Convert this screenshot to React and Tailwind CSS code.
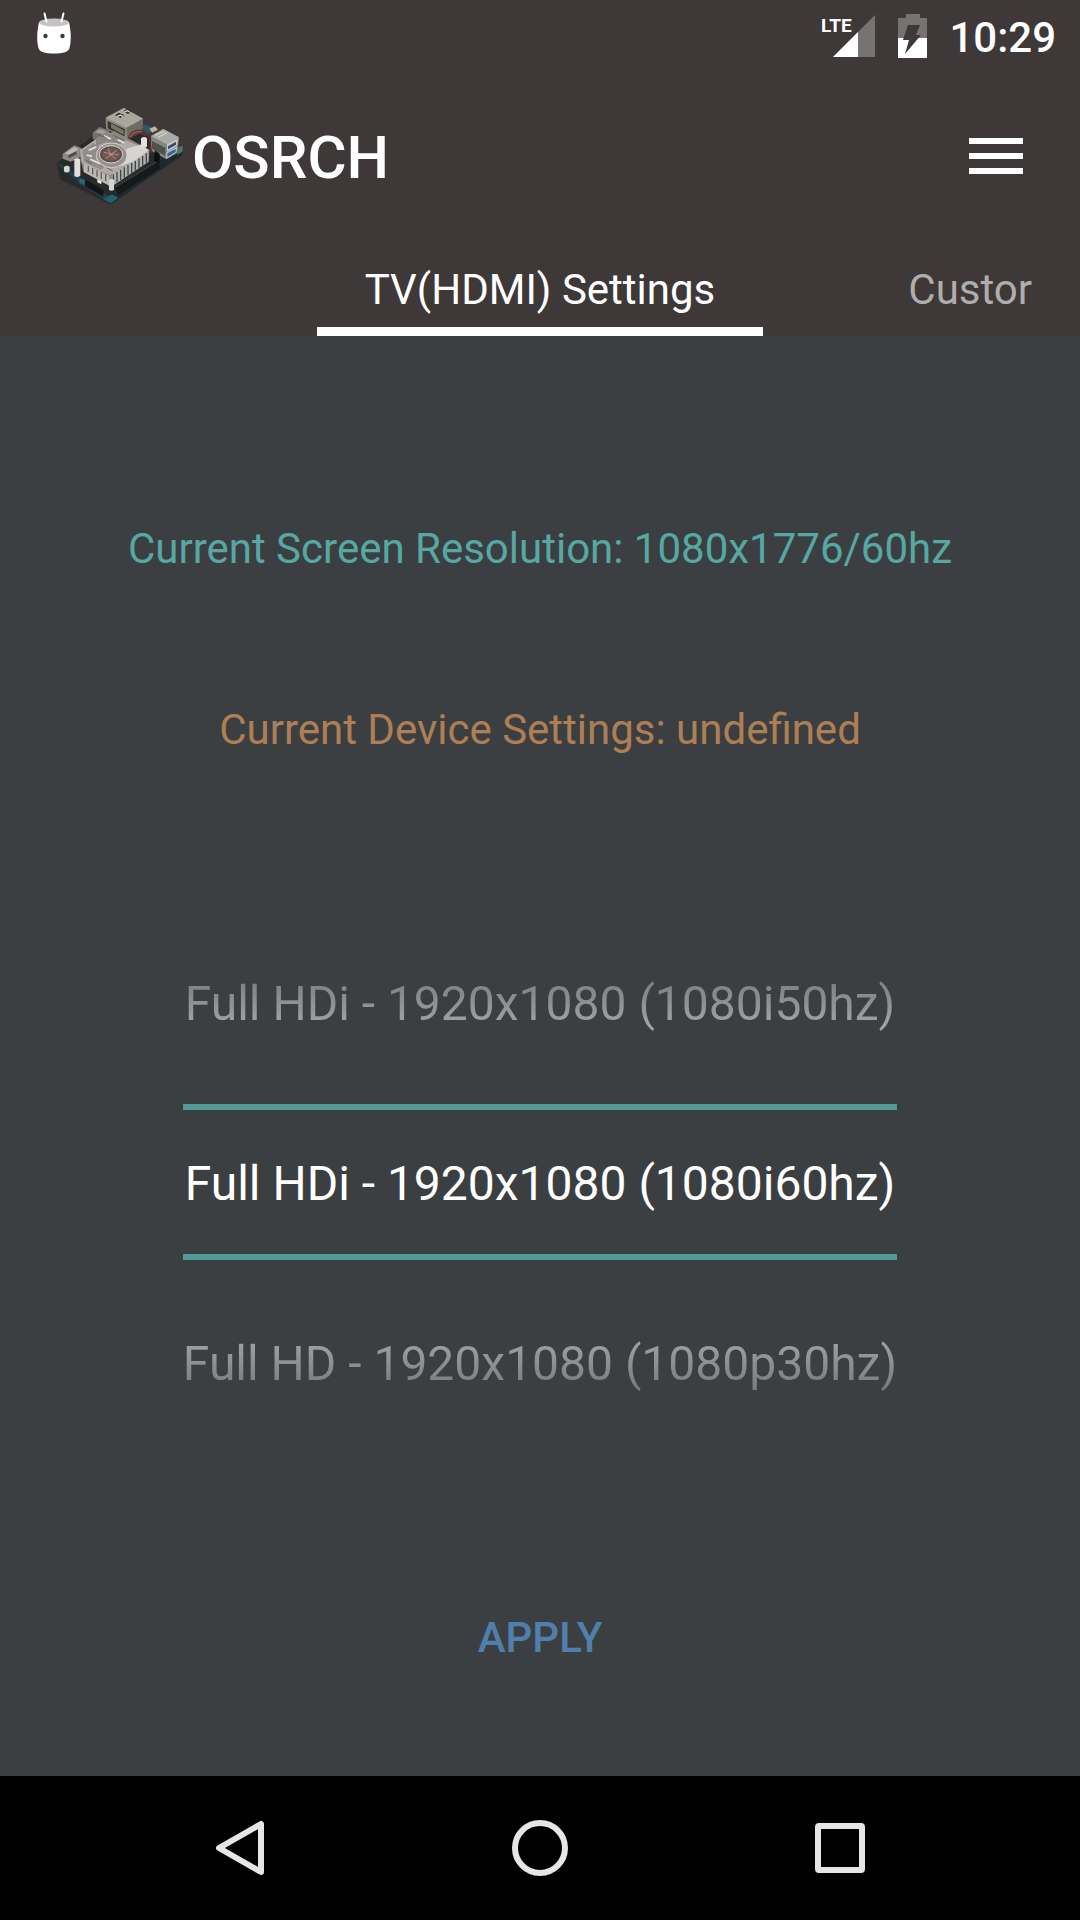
import { useState } from 'react'

const MODES = [
  { id: '1080i50hz', label: 'Full HDi - 1920x1080 (1080i50hz)' },
  { id: '1080i60hz', label: 'Full HDi - 1920x1080 (1080i60hz)' },
  { id: '1080p30hz', label: 'Full HD - 1920x1080 (1080p30hz)' },
]

// Rows above and below the selected one fade towards the picker's edges
function rowText(index, selected) {
  if (index < selected) return 'bg-linear-to-b from-white/5 to-white/80 bg-clip-text text-transparent'
  if (index > selected) return 'bg-linear-to-t from-white/5 to-white/80 bg-clip-text text-transparent'
  return 'text-white'
}

function StatusBar() {
  return (
    <div className="flex h-[72px] items-center justify-between pl-9 pr-6">
      <svg className="h-12 w-9" viewBox="0 0 36 48" fill="none" aria-hidden="true">
        <path d="M3 10C1 19 0.500 29 2.500 36c1 4 6 5.500 15.500 5.500S32.500 40 33.500 36C35.500 29 35 19 33 10z" fill="#fff" />
        <ellipse cx="18" cy="10.500" rx="15" ry="4" fill="#c5c2c2" />
        <path d="M8.500 1.500l2 8M27.500 1.500l-2 8" stroke="#fff" strokeWidth="2" strokeLinecap="round" />
        <circle cx="9.500" cy="24" r="2.200" fill="#3e3838" />
        <circle cx="26.500" cy="24" r="2.200" fill="#3e3838" />
      </svg>
      <div className="flex items-center">
        <svg className="mr-5 h-12 w-14" viewBox="0 0 56 48" role="img" aria-label="LTE signal">
          <path d="M54 3v42H12z" fill="#777373" />
          <path d="M37 20v25H12z" fill="#fff" />
          <text x="0" y="20" fill="#fff" fontSize="19" fontWeight="700" fontFamily="Roboto, sans-serif">LTE</text>
        </svg>
        <svg className="mr-5 h-12 w-8" viewBox="0 0 32 48" role="img" aria-label="Battery charging">
          <path d="M9 2h14v4h7v20H1V6h8z" fill="#777373" />
          <path d="M1 26h29v20H1z" fill="#fff" />
          <path d="M11 13h12l-4 10h5L8 42l4-14H6z" fill="#3e3838" />
        </svg>
        <span className="pt-1 text-[42px] leading-[48px] font-medium">10:29</span>
      </div>
    </div>
  )
}

// Single-board computer with a fan on a clear heat sink
function BoardLogo() {
  return (
    <svg className="h-[130px] w-[160px]" viewBox="0 0 480 390" aria-hidden="true">
      <path d="M50 215l155-112 225 62-5 30-215 145-150-75z" fill="#282b2b" />
      <path d="M52 212l68 48 85 55 5 22-90-60-60-50z" fill="#21414a" />
      <path d="M205 312l220-145 4 20-214 152z" fill="#1c2a2d" />
      <path d="M190 325l25-15 20 10-22 17z" fill="#22606d" />
      <path d="M225 290l130-78 6 20-126 80z" fill="#15191a" />
      <path d="M228 287l128-78" stroke="#606461" strokeWidth="3" strokeDasharray="3 4" />
      <path d="M135 265l55 32v20l-55-32z" fill="#111617" />
      <path d="M120 262l16 5-3 16-16-8z" fill="#2d6670" />

      {/* ethernet and usb ports */}
      <path d="M197 80l55-29 57 32-3 40-48 22-60-32z" fill="#8b8982" />
      <path d="M197 80l55-29 57 32-49 27z" fill="#aaa89d" />
      <path d="M260 110l49-27-3 40-44 21z" fill="#6e6d64" />
      <path d="M203 90l52 25-2 23-50-26z" fill="#34352d" />
      <path d="M213 97l38 21v13l-38-20z" fill="#777861" />
      <path d="M225 73l12-8 16 7-12 9zM250 60l10-6 14 7-10 8z" fill="#2d2e2a" />
      <path d="M231 77l10-5 7 4M253 63l9-4 7 4" stroke="#deddd3" strokeWidth="4" fill="none" />
      <path d="M333 135l37-21 47 25-4 46-34 20-45-26z" fill="#858782" />
      <path d="M333 135l37-21 47 25-36 21z" fill="#aaaba4" />
      <path d="M345 133l28-12M354 139l28-14" stroke="#ddd" strokeWidth="3" />
      <path d="M336 150l40 20v24l-40-21z" fill="#4f514e" />
      <path d="M381 160l33-18-3 22-30 18z" fill="#c5c8c6" />
      <path d="M384 166l24-14v9l-24 14z" fill="#33466e" />
      <path d="M379 185l32-18-2 17-30 19z" fill="#c5c9cc" />
      <path d="M382 187l25-14v10l-25 15z" fill="#3661a5" />
      <path d="M311 100l25 8-7 20-23-8z" fill="#2d5a60" />
      <path d="M328 113l17-7 9 10-18 9z" fill="#b8b6a5" />
      <path d="M416 167l13-3-2 19-16 8z" fill="#527174" />
      <path d="M345 178l14 10v30l-18-9z" fill="#0d1011" />

      {/* clear case and heat sink */}
      <path d="M68 189l35-26 22 9-7 29-26 11-24-9z" fill="#8d8785" />
      <path d="M74 187l28-19 14 7-27 18z" fill="#bdb7b4" />
      <path d="M84 193l24-12 3 8-25 13z" fill="#554b49" />
      <path d="M158 125l20-17 29 9 9 28-35 10-23-12z" fill="#77706f" />
      <path d="M165 124l14-11 20 8-9 9z" fill="#a59e9b" />
      <path d="M117 182l66-47 41-14 105 55-5 35-112 75-82-44z" fill="#8c8784" />
      <path d="M120 178l80-56 125 55-115 75-84-36z" fill="#b0aba8" />
      <path d="M168 144l32-22 60 26-20 12-42-6-30 12z" fill="#8c8683" />
      <path d="M127 180l32-24 18 10-8 40 24 22-10 8-50-22z" fill="#928c89" />
      <path d="M216 248l110-68v32l-112 75z" fill="#b0b1ae" />
      <path d="M220 250v31M231 243v31M242 236v31M253 229v31M264 222v31M275 216v30M286 209v30M297 202v30M308 195v29M319 187v28" stroke="#414644" strokeWidth="4" />
      <path d="M132 217l76 37v30l-76-40z" fill="#bbb7b3" />
      <path d="M145 226v16M158 231v19M171 238v19M184 244v19M197 250v20" stroke="#625e5c" strokeWidth="4" />
      <path d="M262 172l44-12 20 19-43 31-40 16-8-12z" fill="#dedbd8" opacity=".85" />
      <path d="M146 178l23-10M192 134l21 10M233 146l20 10M151 205l29 13M140 192l16 4" stroke="#e6e3e0" strokeWidth="5" />
      <path d="M175 132l24 8M220 133l30 14M136 206l20 13M200 230l18 10" stroke="#66605e" strokeWidth="3" />
      <ellipse cx="215" cy="193" rx="46" ry="37" fill="#98928f" stroke="#d2cecb" strokeWidth="3" />
      <ellipse cx="213" cy="190" rx="35" ry="26" fill="#5c4e4c" stroke="#d9d4d1" strokeWidth="3" />
      <ellipse cx="213" cy="190" rx="27" ry="19" fill="#715550" />
      <path d="M192 184l18 4-5-16M231 178l-16 10 22 4M227 205l-13-14-17 12" stroke="#a98c84" strokeWidth="3" fill="none" />
      <circle cx="213" cy="190" r="5" fill="#a98c84" />
      <path d="M103 205q9-7 18 0v49q-10 8-18 0z" fill="#e0dddb" />
      <path d="M72 228q10-8 17 0v13q-10 7-17 0z" fill="#d7d5d2" />
      <path d="M303 142q9-8 18 0v25q-9 6-18 0z" fill="#e2e1dc" />
      <path d="M207 267q8-6 15 0v30q-8 5-15 0z" fill="#d8d6d3" />
      <path d="M265 143c5-25 38-34 56-15 13 13 5 34 15 59M274 142c7-17 32-22 42-7" fill="none" stroke="#752a2d" strokeWidth="4" />
      <path d="M172 265l12 6v9l-12-6z" fill="#eee" />
    </svg>
  )
}

function AppBar() {
  return (
    <header className="flex h-[168px] items-center justify-between px-10">
      <div className="flex items-center">
        <BoardLogo />
        <h1 className="-ml-2 pt-1 text-[60px] leading-[72px] font-medium">OSRCH</h1>
      </div>
      <button type="button" aria-label="Menu" className="flex h-[72px] w-[88px] flex-col items-center justify-center gap-[9px]">
        <span className="h-[6px] w-[54px] bg-white" />
        <span className="h-[6px] w-[54px] bg-white" />
        <span className="h-[6px] w-[54px] bg-white" />
      </button>
    </header>
  )
}

function TabStrip() {
  return (
    <nav className="grid h-24 grid-cols-[1fr_auto_1fr] text-[42px] leading-[48px]">
      <span />
      <button type="button" aria-current="page" className="border-b-[9px] border-white px-12 pt-[26px] pb-[13px]">
        TV(HDMI) Settings
      </button>
      <button type="button" className="justify-self-end px-12 pt-[26px] pb-[22px] text-[#b0adad]">
        Custor
      </button>
    </nav>
  )
}

function ModePicker({ selected, onSelect }) {
  return (
    <fieldset aria-label="Resolution" className="mx-auto flex w-[714px] max-w-full flex-col">
      {MODES.map((mode, index) => (
        <label key={mode.id} className="flex h-[180px] cursor-pointer items-center">
          <input
            type="radio"
            name="mode"
            value={mode.id}
            checked={index === selected}
            onChange={() => onSelect(index)}
            className="sr-only"
          />
          <span
            className={`flex w-full items-center justify-center pt-1 text-[48px] leading-[56px] whitespace-nowrap ${
              index === selected ? 'h-[156px] border-y-[6px] border-[#509b97]' : 'h-[180px]'
            } ${rowText(index, selected)}`}
          >
            {mode.label}
          </span>
        </label>
      ))}
    </fieldset>
  )
}

function NavBar() {
  return (
    <nav className="flex h-36 items-center justify-center gap-[228px] bg-black">
      <button type="button" aria-label="Back">
        <svg className="size-[72px]" viewBox="0 0 72 72" fill="none" stroke="#e6e6e6" strokeWidth="6" strokeLinejoin="round">
          <path d="M57 12v48L15 36z" />
        </svg>
      </button>
      <button type="button" aria-label="Home">
        <svg className="size-[72px]" viewBox="0 0 72 72" fill="none" stroke="#e6e6e6" strokeWidth="6">
          <circle cx="36" cy="36" r="25" />
        </svg>
      </button>
      <button type="button" aria-label="Overview">
        <svg className="size-[72px]" viewBox="0 0 72 72" fill="none" stroke="#e6e6e6" strokeWidth="6" strokeLinejoin="round">
          <rect x="14" y="14" width="44" height="44" rx="1" />
        </svg>
      </button>
    </nav>
  )
}

export default function App() {
  const [selected, setSelected] = useState(1)

  return (
    <div className="flex min-h-screen flex-col bg-[#3c3f41] font-['Roboto',sans-serif] text-white">
      <div className="bg-[#3e3838]">
        <StatusBar />
        <AppBar />
        <TabStrip />
      </div>
      <main className="flex flex-1 flex-col items-center pt-[188px] text-[42px] leading-[50px]">
        <p className="text-[#56a8a2]">Current Screen Resolution: 1080x1776/60hz</p>
        <p className="mt-[131px] mb-[157px] text-[#ae7f54]">Current Device Settings: undefined</p>
        <ModePicker selected={selected} onSelect={setSelected} />
        <button type="button" className="mt-[114px] h-36 px-12 font-medium text-[#507fad]">
          APPLY
        </button>
      </main>
      <NavBar />
    </div>
  )
}
